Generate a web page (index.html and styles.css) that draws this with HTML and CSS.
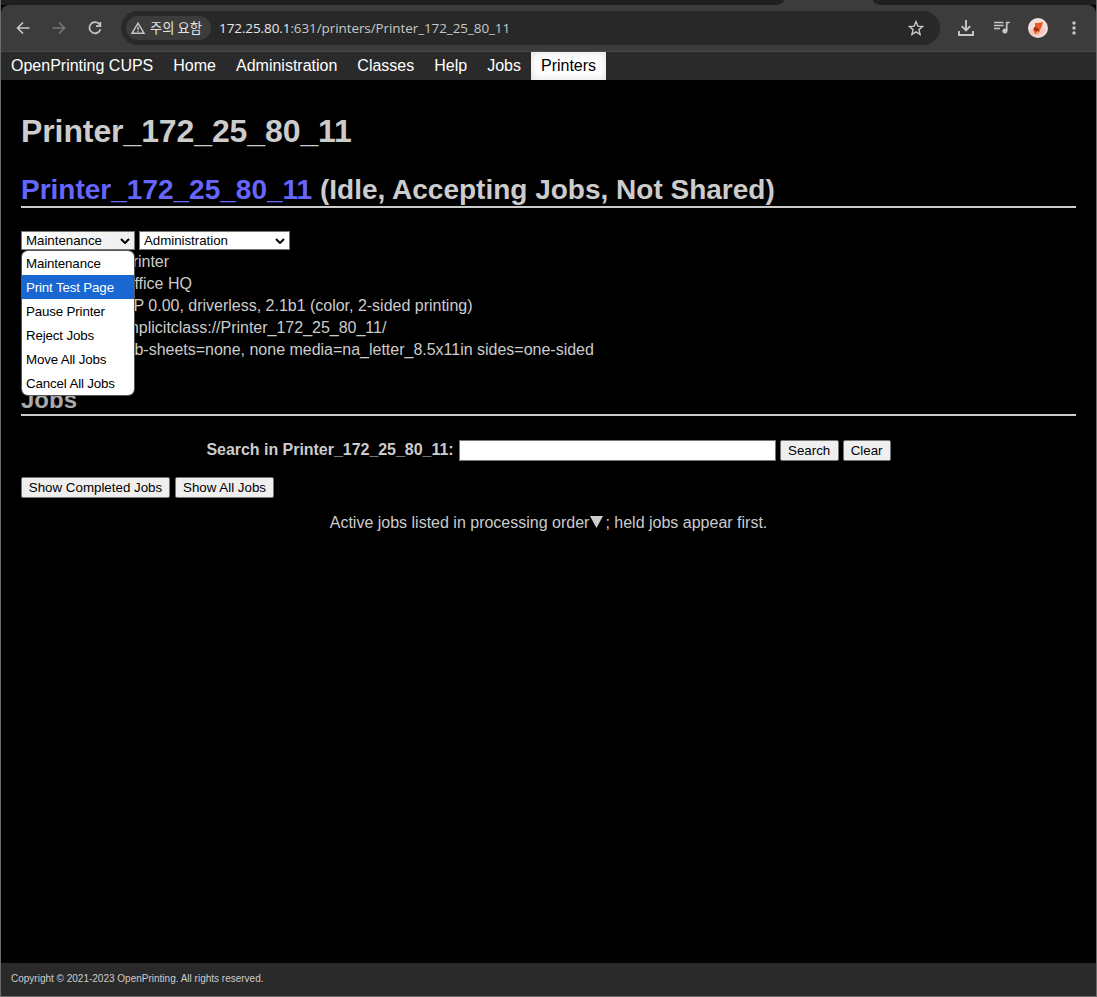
FILE: index.html
```html
<!DOCTYPE html>
<html lang="en">
<head>
<meta charset="utf-8">
<title>Printer_172_25_80_11</title>
<link rel="stylesheet" href="styles.css">
</head>
<body>
<div class="window">
  <div class="tabstrip"><span class="tabs-left"></span><span class="tab-active"></span><span class="tabs-right"></span></div>
  <header class="toolbar">
    <svg class="icon back" viewBox="0 0 16 16"><path d="M14.5 8H3M8 2.5 2.5 8 8 13.5"/></svg>
    <svg class="icon forward" viewBox="0 0 16 16"><path d="M1.5 8H13M8 2.5 13.5 8 8 13.5"/></svg>
    <svg class="icon reload" viewBox="0 0 16 16"><path d="M12.6 4.5A5.6 5.6 0 1 0 13.4 9.2M13.4 2v4.2H9"/></svg>
    <div class="omnibox">
      <div class="chip">
        <svg class="warn" viewBox="0 0 14 12"><path d="M7 1.2 13 11.3H1zM7 4.8v3.2M7 8.8v1.3"/></svg>
        <span>주의 요함</span>
      </div>
      <div class="url"><b>172.25.80.1</b>:631/printers/Printer_172_25_80_11</div>
      <svg class="icon star" viewBox="0 0 16 16"><path d="m8 1.6 1.8 4.5 4.8.4-3.7 3.1 1.2 4.8L8 11.8l-4.1 2.6 1.2-4.8-3.7-3.1 4.8-.4z"/></svg>
    </div>
    <svg class="icon download" viewBox="0 0 16 16"><path d="M8 0v10M3.8 6.2 8 10.4l4.2-4.2M1 11v4h14v-4"/></svg>
    <svg class="icon media" viewBox="0 0 16 16"><path d="M0 2.5h9.5M0 5.5h9.5M0 8.5h6M15.8 2.5h-3.1v8.5"/><circle cx="10.9" cy="11" r="2.5"/></svg>
    <svg class="avatar" viewBox="0 0 20 20"><circle cx="10" cy="10" r="10" fill="#f6dddd"/><path d="M1 13l6-3 11 1a10 10 0 0 1-16 5z" fill="#fbc5bc"/><path d="M7 5l3 0 5-1-1 4-2 4-1 3-4 1-2-5 2-2z" fill="#ed5a20"/><path d="m6 9 4 1 1 3-2 1-3-2z" fill="#9d3316"/><path d="m8 14 2-1 1 2-2 1z" fill="#edad77"/></svg>
    <svg class="dots" viewBox="0 0 4 14"><circle cx="2" cy="2" r="1.7"/><circle cx="2" cy="7" r="1.7"/><circle cx="2" cy="12" r="1.7"/></svg>
  </header>
  <nav class="nav">
    <a>OpenPrinting CUPS</a><a>Home</a><a>Administration</a><a>Classes</a><a>Help</a><a>Jobs</a><a class="active">Printers</a>
  </nav>
  <main class="content">
    <h1>Printer_172_25_80_11</h1>
    <h2 class="title"><a>Printer_172_25_80_11</a> (Idle, Accepting Jobs, Not Shared)</h2>
    <div class="actions">
      <div class="select maintenance">Maintenance<svg viewBox="0 0 10 6"><path d="m1 1 4 4 4-4"/></svg>
        <ul class="menu">
          <li>Maintenance</li><li class="selected">Print Test Page</li><li>Pause Printer</li><li>Reject Jobs</li><li>Move All Jobs</li><li>Cancel All Jobs</li>
        </ul>
      </div>
      <div class="select administration">Administration<svg viewBox="0 0 10 6"><path d="m1 1 4 4 4-4"/></svg></div>
    </div>
    <div class="details">
      <span>Printer</span>
      <span>Office HQ</span>
      <span>HP 0.00, driverless, 2.1b1 (color, 2-sided printing)</span>
      <span>implicitclass://Printer_172_25_80_11/</span>
      <span>job-sheets=none, none media=na_letter_8.5x11in sides=one-sided</span>
    </div>
    <h2 class="jobs">Jobs</h2>
    <form class="search">
      <label for="query">Search in Printer_172_25_80_11:</label>
      <input id="query" type="text">
      <button type="button" class="w-search">Search</button>
      <button type="button" class="w-clear">Clear</button>
    </form>
    <div class="filters">
      <button type="button" class="w-completed">Show Completed Jobs</button>
      <button type="button" class="w-all">Show All Jobs</button>
    </div>
    <p class="note">Active jobs listed in processing order<svg viewBox="0 0 12 11"><path d="M0 0h12L6 11z"/></svg>; held jobs appear first.</p>
  </main>
  <footer class="footer">Copyright © 2021-2023 OpenPrinting. All rights reserved.</footer>
</div>
</body>
</html>
```
FILE: styles.css
```css
* { box-sizing: border-box; }
body { margin: 0; background: #000; color: #ccc; font: 16px/22px "Liberation Sans", Arial, sans-serif; }
.window { display: flex; flex-direction: column; height: 997px; border: 1px solid #6b6b6b; border-top: 0; }
.tabstrip { display: flex; height: 5px; background: #3c3c3c; }
.tabs-left { width: 783px; background: #1f2120; border-bottom-right-radius: 8px 5px; }
.tab-active { width: 89px; }
.tabs-right { flex: 1; background: #1f2120; border-bottom-left-radius: 8px 5px; }
.toolbar { display: flex; align-items: center; height: 47px; padding: 0 20px 1px 14px; background: #3c3c3c; border-bottom: 1px solid #4a4a4a; border-radius: 8px 8px 0 0; }
.icon { width: 16px; height: 16px; fill: none; stroke: #c7c7c7; stroke-width: 1.7; flex: none; }
.forward { margin-left: 20px; stroke: #767676; }
.reload { margin-left: 20px; }
.omnibox { display: flex; align-items: center; width: 819px; height: 34px; margin-left: 18px; padding: 0 16px 0 5px; border-radius: 17px; background: #282828; }
.chip { display: flex; align-items: center; width: 85px; height: 24px; padding-left: 5px; gap: 5px; border-radius: 12px; background: #3c3c3c; color: #e3e3e3; font: 13.3px/22px "Noto Sans CJK KR", sans-serif; white-space: nowrap; }
.warn { width: 14px; height: 12px; fill: none; stroke: #c7c7c7; stroke-width: 1.4; flex: none; }
.url { flex: 1; margin-left: 8px; color: #c7c7c7; font: 13.5px/20px "Open Sans", sans-serif; letter-spacing: -0.09px; white-space: nowrap; }
.url b { font-weight: 400; color: #e8e8e8; }
.star { stroke-width: 1.4; }
.download { margin-left: 18px; stroke-width: 1.9; }
.media { margin-left: 20px; }
.media circle { fill: #c7c7c7; stroke: none; }
.avatar { width: 20px; height: 20px; margin-left: 18px; flex: none; }
.dots { width: 4px; height: 14px; margin-left: 24px; fill: #c7c7c7; flex: none; }
.nav { display: flex; height: 28px; background: #2a2a2a; color: #fff; line-height: 27px; }
.nav a { padding: 0 10px; }
.nav .active { background: #fff; color: #000; box-shadow: inset 0 0 8px #ddd; }
.content { flex: 1; padding: 32px 20px 0; }
h1, h2 { margin: 0; font-weight: 700; }
h1 { font-size: 32px; line-height: 38px; letter-spacing: -0.1px; }
.title { margin-top: 22px; height: 36px; font-size: 28px; line-height: 36px; border-bottom: 2px solid #ccc; }
.title a { color: #6666ff; }
.actions { display: flex; gap: 4px; margin-top: 23px; }
.select { position: relative; display: flex; align-items: center; justify-content: space-between; height: 19px; padding: 0 4px; border: 1px solid #767676; background: #fff; color: #000; font-size: 13.333px; line-height: 17px; letter-spacing: -0.04px; }
.select svg { width: 10px; height: 6px; fill: none; stroke: #000; stroke-width: 2; }
.maintenance { width: 114px; background: linear-gradient(90deg, #fff, #eee); }
.administration { width: 151px; }
.menu { position: absolute; z-index: 1; left: 0; top: 19px; width: 112px; margin: 0; padding: 0; list-style: none; overflow: hidden; border-radius: 6px; background: #fff; box-shadow: 0 0 0 1px #555; letter-spacing: -0.15px; }
.menu li { height: 24px; padding-left: 4px; font-size: 13.333px; line-height: 25px; }
.menu .selected { background: #1967d2; color: #fff; }
.details { display: flex; flex-direction: column; margin: 1px 0 0 101px; letter-spacing: -0.01px; }
.jobs { margin-top: 27px; height: 28px; font-size: 24px; line-height: 23px; color: #aaa; border-bottom: 2px solid #ccc; }
.search { display: flex; justify-content: center; align-items: center; gap: 4px; height: 21px; margin-top: 24px; font-weight: 700; }
.search label { margin-right: 1px; padding-bottom: 2px; letter-spacing: -0.03px; }
.search input { width: 317px; height: 21px; margin: 0; border: 1px solid #767676; background: #fff; }
button { height: 21px; padding: 0; border: 1px solid #767676; border-radius: 2px; background: #efefef; color: #000; font: 13.333px/19px "Liberation Sans", Arial, sans-serif; }
.w-search { width: 59px; }
.w-clear { width: 48px; }
.filters { display: flex; gap: 5px; margin-top: 16px; }
.w-completed { width: 149px; }
.w-all { width: 99px; }
.note { margin: 14px 0 0; text-align: center; }
.note svg { width: 13px; height: 12px; margin: 0 2px 0 1px; fill: #ccc; }
.footer { height: 33px; padding-left: 10px; background: #2a2a2a; font-size: 10px; line-height: 31px; }
```
